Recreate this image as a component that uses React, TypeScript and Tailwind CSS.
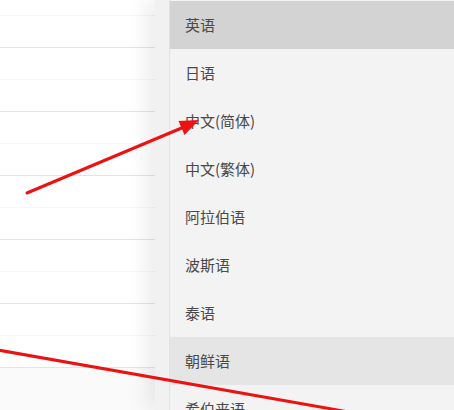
const langs = ["英语", "日语", "中文(简体)", "中文(繁体)", "阿拉伯语", "波斯语", "泰语", "朝鲜语", "希伯来语"];

function LeftList() {
  const rows = Array.from({ length: 5 });
  return (
    <div className="flex-1 bg-white flex flex-col">
      <div className="h-[16px] shrink-0 border-b border-dotted border-[#eeeeee]" />
      <div className="h-[32px] shrink-0 border-b border-[#e4e4e4]" />
      {rows.map((_, i) => (
        <div key={i} className="flex flex-col shrink-0">
          <div className="h-[32px] border-b border-dotted border-[#eeeeee]" />
          <div className="h-[32px] border-b border-[#e4e4e4]" />
        </div>
      ))}
      <div className="flex-1 bg-[#fafafa]" />
    </div>
  );
}

function Arrows() {
  return (
    <svg className="absolute inset-0 pointer-events-none" width="454" height="410" viewBox="0 0 454 410">
      <line x1="27" y1="193" x2="184" y2="127" stroke="#ec1212" strokeWidth="3" strokeLinecap="round" />
      <polygon points="199,120 184.5,135 178.5,121" fill="#ec1212" />
      <line x1="-2" y1="350" x2="360" y2="414" stroke="#ec1212" strokeWidth="3" />
    </svg>
  );
}

export default function App() {
  return (
    <div className="relative w-[454px] h-[410px] overflow-hidden flex" style={{ fontFamily: '"Noto Sans CJK SC", "Noto Sans", sans-serif' }}>
      <LeftList />
      <div className="relative w-[299px] flex bg-[#f1f1f1] shadow-[-10px_0_18px_rgba(0,0,0,0.07)]">
        <div className="w-[15px] border-r border-[#e2e2e2]" />
        <ul className="flex-1 pt-px bg-[#f3f3f3]">
          {langs.map((l) => (
            <li
              key={l}
              className={`h-12 flex items-center pl-[15px] text-[15px] text-[#4a4a4a] ${l === "英语" ? "bg-[#d3d3d3]" : l === "朝鲜语" ? "bg-[#e5e5e5]" : ""}`}
            >
              {l}
            </li>
          ))}
        </ul>
      </div>
      <Arrows />
    </div>
  );
}
